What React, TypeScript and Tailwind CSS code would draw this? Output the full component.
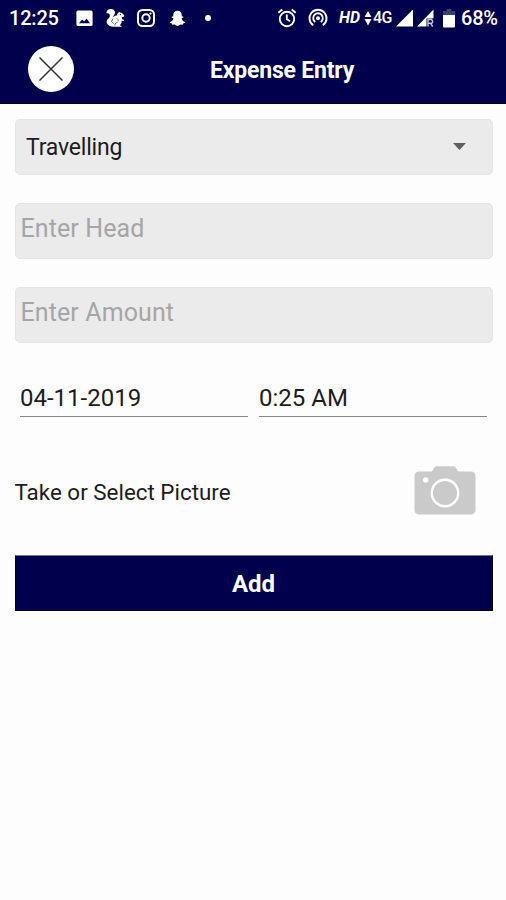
import type { ReactNode } from 'react'

interface FieldProps {
  children: ReactNode
  className?: string
}

function StatusBar() {
  return (
    <div className="flex h-9 items-center whitespace-nowrap pl-[9px] text-[20px] font-medium leading-none text-white">
      <span className="w-[67px] shrink-0 tracking-[-0.2px]">12:25</span>

      <svg className="mr-[12px] shrink-0" width="17" height="17" viewBox="0 0 17 17" fill="currentColor">
        <path fillRule="evenodd" d="M2 .5h13A1.6 1.6 0 0 1 16.600 2v12.500A1.600 1.600 0 0 1 15 16H2A1.600 1.600 0 0 1 .4 14.500V2A1.600 1.600 0 0 1 2 .5ZM3 13.300h11l-3.500-4.700-2.400 3-2-2.200Z" />
      </svg>

      {/* squirrel */}
      <svg className="mr-[12px] shrink-0" width="20" height="20" viewBox="0 0 20 20" fill="currentColor">
        <path d="M1.500 5.300C1.300 2.200 4 .7 6.300 1c3 .3 4.300 2.600 3.500 4.800-.5 1.500-1.900 2.300-1.600 3.600 1.100-1.400 2.500-1.900 3.900-1.800-.2-1.500.4-2.400 1.400-2.900l.3-1.200 1.100 1c2 .2 3.500 1.600 4.400 3.300-.3 1-1.200 1.400-2.600 1.500l.5 1.900 1.900.7-.5 1-2-.1c.2 2-.5 3.400-1.800 4.400l1.800.8v.8H9.400c-4 .1-6.700-1.300-7.600-3.700-.5-1.500 0-3 1.200-4 1.500-1.300 2.400-2.800 1.600-4.500-.6-1.200-1.800-1.500-3.100-1.300Z" />
        <path d="m8 10.500-1.500 3.200 2.200 2.100M11.500 10.500c1.400.3 2 1.400 1.700 2.600M9.800 17.500c.3-2 1.300-3.100 2.900-3.300" fill="none" stroke="#00004d" strokeWidth=".6" />
        <circle cx="15.300" cy="6.700" r=".6" fill="#00004d" />
      </svg>

      <svg className="mr-[14px] shrink-0" width="18" height="18" viewBox="0 0 18 18" fill="none" stroke="currentColor" strokeWidth="2">
        <rect x="1" y="1" width="16" height="16" rx="4.500" />
        <circle cx="9" cy="9" r="3.700" />
        <circle cx="13.500" cy="4.600" r="1.100" fill="currentColor" stroke="none" />
      </svg>

      {/* snapchat ghost */}
      <svg className="mr-[19px] shrink-0" width="17" height="17" viewBox="0 0 17 17" fill="currentColor">
        <path d="M8.500.7c2.700 0 4.200 1.900 4.200 4.300v1.600l1.300-.2c.6.4.5 1-.2 1.400l-1.200.6c.6 1.800 1.600 3 3.500 3.700.4.800-.6 1.300-2 1.500l-.4 1.100-2.100-.1c-1.200.4-1.700 1.300-3.100 1.300s-1.900-.9-3.100-1.300l-2.100.1-.4-1.100c-1.400-.2-2.400-.7-2-1.500 1.900-.7 2.900-1.900 3.500-3.700l-1.200-.6c-.7-.4-.8-1-.2-1.400l1.300.2V5C4.300 2.600 5.800.7 8.500.7Z" />
      </svg>

      <span className="size-[6px] shrink-0 rounded-full bg-white" />

      <svg className="ml-[66px] mr-[11px] shrink-0" width="20" height="20" viewBox="0 0 20 20" fill="none" stroke="currentColor" strokeWidth="1.900">
        <circle cx="10" cy="11" r="7.200" />
        <path d="m1.300 4.800 4-3.300M18.700 4.800l-4-3.300M9.800 6.500v4.800l3.300 2" />
      </svg>

      <svg className="mr-[11px] shrink-0" width="20" height="20" viewBox="0 0 20 20" fill="none" stroke="currentColor" strokeWidth="1.900">
        <path d="M5.200 17.300a8.500 8.500 0 1 1 9.600 0M7.200 14a4.800 4.800 0 1 1 5.600 0" />
        <circle cx="10" cy="10.300" r="2" fill="currentColor" stroke="none" />
      </svg>

      <span className="w-[25px] shrink-0 text-[16px] font-bold italic">HD</span>
      <svg className="mr-px shrink-0" width="8" height="15" viewBox="0 0 8 15" fill="currentColor">
        <path d="m4 0 3.500 6H.5ZM4 14.500.5 8h7Z" />
      </svg>
      <span className="w-[23px] shrink-0 text-[16px] tracking-[-0.5px]">4G</span>

      <svg className="mr-[4px] shrink-0" width="17" height="18" viewBox="0 0 17 18" fill="currentColor">
        <path d="M17 .5v17H0Z" />
      </svg>
      <svg className="mr-[9px] shrink-0" width="17" height="18" viewBox="0 0 17 18">
        <path d="M16.500.5v17H0Z" fill="#fff" />
        <path d="M9.500 9.500H17V18H9.500Z" fill="#00004d" />
        <path d="M11 17.500v-7h2.700a1.900 1.900 0 0 1 0 3.800H11m2.500 0 2.300 3.200" fill="none" stroke="#c9c9df" strokeWidth="1.400" />
      </svg>
      <svg className="mr-[6px] shrink-0" width="12" height="19" viewBox="0 0 12 19">
        <path d="M3.500 0h5v2H12v4H0V2h3.500Z" fill="#3d3d7c" />
        <path d="M0 6h12v11.500a1 1 0 0 1-1 1H1a1 1 0 0 1-1-1Z" fill="#fff" />
      </svg>
      <span className="tracking-[-0.2px]">68%</span>
    </div>
  )
}

function Field({ children, className = '' }: FieldProps) {
  return (
    <div className={`flex h-14 rounded-[5px] border border-[#e4e4e4] bg-[#ebebeb] ${className}`}>
      {children}
    </div>
  )
}

function CameraIcon() {
  return (
    <svg width="62" height="50" viewBox="0 0 62 50" className="mr-[17px] block">
      <path d="M5 5.500h12c1.500 0 2-1.500 2.700-3 .6-1.500 1.700-2.200 3.300-2.200h16c1.600 0 2.700.7 3.300 2.200.7 1.500 1.200 3 2.700 3h12a4.500 4.500 0 0 1 4.500 4.500v34a4.500 4.500 0 0 1-4.500 4.500H5A4.500 4.500 0 0 1 .5 44V10A4.500 4.500 0 0 1 5 5.500Z" fill="#cacaca" />
      <circle cx="31" cy="27" r="13.200" fill="none" stroke="#fff" strokeWidth="2.400" />
      <circle cx="11.700" cy="14" r="2.700" fill="#fff" />
    </svg>
  )
}

export default function App() {
  return (
    <div className="h-[900px] w-[506px] overflow-hidden bg-[#fdfdfd] font-[Roboto,sans-serif] text-[#1c1c1c]">
      <header className="h-[104px] border-b border-black bg-[#00004d]">
        <StatusBar />
        <div className="flex h-[66px] items-center pl-[28px]">
          <button aria-label="Close" className="flex size-[46px] items-center justify-center rounded-full bg-white">
            <svg width="24" height="24" viewBox="0 0 24 24" fill="none" stroke="#333" strokeWidth="1.500">
              <path d="m.5.5 23 23M23.500.5l-23 23" />
            </svg>
          </button>
          <h1 className="ml-[136px] pt-[3px] text-[23px] font-bold leading-none tracking-[-0.2px] text-white">Expense Entry</h1>
        </div>
      </header>

      <main className="pl-[14.500px] pr-[13.500px] pt-[14.500px]">
        <Field className="items-center justify-between pl-[10.500px] pr-[26px]">
          <span className="pt-px text-[23px] leading-none tracking-[-0.2px]">Travelling</span>
          <svg width="13" height="7" viewBox="0 0 13 7" fill="#606060">
            <path d="M0 0h13L6.500 7Z" />
          </svg>
        </Field>
        <Field className="mt-[28.500px] pl-[5px] pt-[12px] text-[25px] leading-none tracking-[0.100px] text-[#a5a5a5]">Enter Head</Field>
        <Field className="mt-[28px] pl-[5px] pt-[12px] text-[25px] leading-none tracking-[0.100px] text-[#a5a5a5]">Enter Amount</Field>

        <div className="mt-[37px] grid grid-cols-2 gap-[11px] pl-[5.500px] pr-[5.500px] text-[24px] leading-none">
          <div className="h-[37px] border-b-[1.500px] border-[#858585] pt-[6px]">04-11-2019</div>
          <div className="h-[37px] border-b-[1.500px] border-[#858585] pt-[6px]">0:25 AM</div>
        </div>

        <div className="mt-[49px] flex h-[50px] items-center justify-between">
          <span className="pt-[3px] text-[22.400px] leading-none">Take or Select Picture</span>
          <CameraIcon />
        </div>

        <button className="mt-[39px] flex h-[56px] w-full items-center justify-center border border-black border-t-[#777] bg-[#00004d] pt-[2px] text-[24px] font-bold leading-none text-white">
          Add
        </button>
      </main>
    </div>
  )
}
